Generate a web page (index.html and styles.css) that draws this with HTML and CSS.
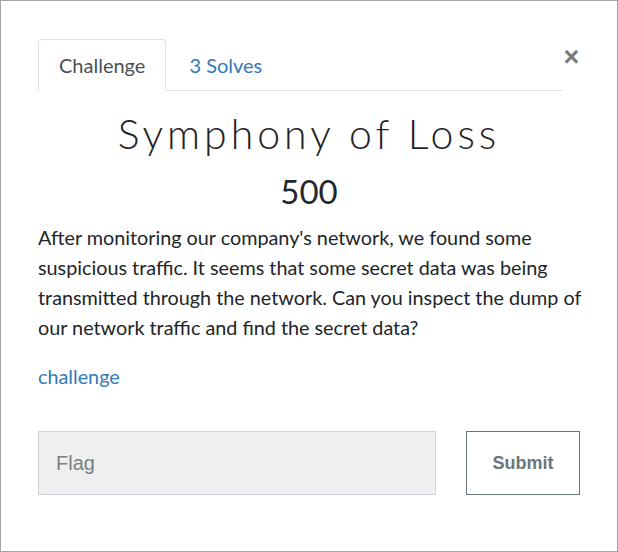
FILE: index.html
```html
<!DOCTYPE html>
<html>
<head>
<meta charset="utf-8">
<link rel="stylesheet" href="styles.css">
</head>
<body>
<div class="frame">
  <div class="header">
    <ul class="tabs">
      <li class="tab active">Challenge</li>
      <li class="tab link">3 Solves</li>
    </ul>
    <button class="close" aria-label="Close">&times;</button>
  </div>
  <h2 class="title">Symphony of Loss</h2>
  <h3 class="value">500</h3>
  <p class="desc">After monitoring our company's network, we found some suspicious traffic. It seems that some secret data was being transmitted through the network. Can you inspect the dump of our network traffic and find the secret data?</p>
  <a class="file" href="#">challenge</a>
  <form class="submit-row">
    <input class="flag" type="text" placeholder="Flag">
    <button class="submit" type="button">Submit</button>
  </form>
</div>
</body>
</html>
```
FILE: styles.css
```css
html, body {
  margin: 0;
  padding: 0;
  background: #fff;
}
.frame {
  width: 618px;
  height: 552px;
  box-sizing: border-box;
  border: 1px solid #a3a3a3;
  padding: 38px 37px 0 37px;
  font-family: Lato, "Open Sans", sans-serif;
  color: #212529;
}
.header {
  display: flex;
  align-items: flex-start;
}
.tabs {
  flex: 1;
  display: flex;
  margin: 0;
  padding: 0;
  list-style: none;
  border-bottom: 1px solid #dee2e6;
}
.tab {
  font-size: 20px;
  line-height: 26px;
  padding: 12px 20px 12px 20px;
  margin-bottom: -1px;
  border: 1px solid transparent;
  border-top-left-radius: 4px;
  border-top-right-radius: 4px;
}
.tab.active {
  color: #495057;
  background: #fff;
  border-color: #dee2e6 #dee2e6 #fff;
}
.tab.link {
  color: #337ab7;
  padding-left: 22px;
}
.close {
  width: 17px;
  margin-left: 0;
  padding: 0;
  border: 0;
  background: none;
  font-family: "Liberation Sans", Arial, sans-serif;
  font-weight: 700;
  font-size: 27px;
  line-height: 30px;
  color: #7a7a7a;
  margin-top: 3px;
}
.title {
  margin: 19px 0 0 0;
  text-align: center;
  font-family: Lato, sans-serif;
  font-weight: 300;
  font-size: 41px;
  line-height: 48px;
  letter-spacing: 4px;
  color: #1f2226;
}
.value {
  margin: 10px 0 0 0;
  text-align: center;
  font-weight: 400;
  font-size: 33px;
  line-height: 46px;
  color: #24272b;
}
.desc {
  margin: 8px -8px 0 0;
  font-size: 19.8px;
  line-height: 30px;
}
.file {
  display: block;
  margin-top: 19px;
  font-size: 19.8px;
  line-height: 30px;
  color: #337ab7;
  text-decoration: none;
}
.submit-row {
  display: flex;
  justify-content: space-between;
  margin-top: 40px;
}
.flag {
  width: 398px;
  height: 64px;
  box-sizing: border-box;
  border: 1px solid #ced4da;
  background: #efefef;
  padding: 0 17px;
  font-family: "Liberation Sans", Arial, sans-serif;
  font-size: 20px;
  color: #495057;
  outline: none;
}
.flag::placeholder {
  color: #7a7f84;
}
.submit {
  width: 114px;
  height: 64px;
  box-sizing: border-box;
  background: #fff;
  border: 1px solid #6c757d;
  color: #6c757d;
  font-family: "Liberation Sans", Arial, sans-serif;
  font-weight: 700;
  font-size: 18px;
  margin-right: 0;
}
```
